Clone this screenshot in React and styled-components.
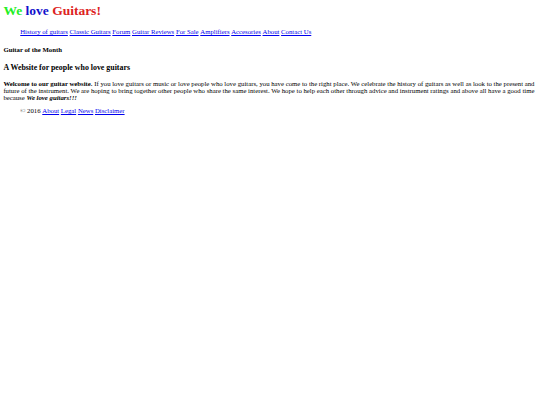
import React from "react";
import styled, { createGlobalStyle } from "styled-components";

// the reference is a 1280px-wide page shrunk to 540px
const GlobalStyle = createGlobalStyle`
  html {
    zoom: 0.421875;
    background: #ffffff;
    overflow-x: hidden;
  }
  body {
    margin: 8px;
    font-family: "Liberation Serif", "Times New Roman", serif;
    font-size: 16px;
    color: #000000;
  }
  a {
    color: #0000ee;
  }
`;

const Title = styled.h1`
  font-size: 2em;
  font-weight: bold;
  margin: 0 0 0.67em;
`;

const Word = styled.span`
  color: ${(p) => p.color};
`;

const LinkList = styled.ul`
  list-style: none;
  margin: 16px 0;
  padding-left: 40px;

  li {
    display: inline;
  }
`;

const MonthTitle = styled.h4`
  font-size: 1em;
  margin: 24px 0;
`;

const SubTitle = styled.h3`
  font-size: 1.17em;
  margin: 1em 0;
`;

const Intro = styled.p`
  margin: 16px 0;
`;

const navLinks = [
  "History of guitars",
  "Classic Guitars",
  "Forum",
  "Guitar Reviews",
  "For Sale",
  "Amplifiers",
  "Accesories",
  "About",
  "Contact Us",
];

const footerLinks = ["About", "Legal", "News", "Disclaimer"];

const App = () => {
  return (
    <>
      <GlobalStyle />
      <header>
        <Title>
          <Word color="#22ee22">We</Word> <Word color="#1111cc">love</Word>{" "}
          <Word color="#dd2222">Guitars!</Word>
        </Title>
        <nav>
          <LinkList>
            {navLinks.map((l) => (
              <li key={l}>
                <a href="#">{l}</a>{" "}
              </li>
            ))}
          </LinkList>
        </nav>
      </header>
      <main>
        <MonthTitle>Guitar of the Month</MonthTitle>
        <SubTitle>A Website for people who love guitars</SubTitle>
        <Intro>
          <strong>Welcome to our guitar website.</strong> If you love guitars or
          music or love people who love guitars, you have come to the right
          place. We celebrate the history of guitars as well as look to the
          present and future of the instrument. We are hoping to bring together
          other people who share the same interest. We hope to help each other
          through advice and instrument ratings and above all have a good time
          because <strong><em>We love guitars!!!</em></strong>
        </Intro>
      </main>
      <footer>
        <LinkList>
          <li>© 2016 </li>
          {footerLinks.map((l) => (
            <li key={l}>
              <a href="#">{l}</a>{" "}
            </li>
          ))}
        </LinkList>
      </footer>
    </>
  );
};

export default App;
